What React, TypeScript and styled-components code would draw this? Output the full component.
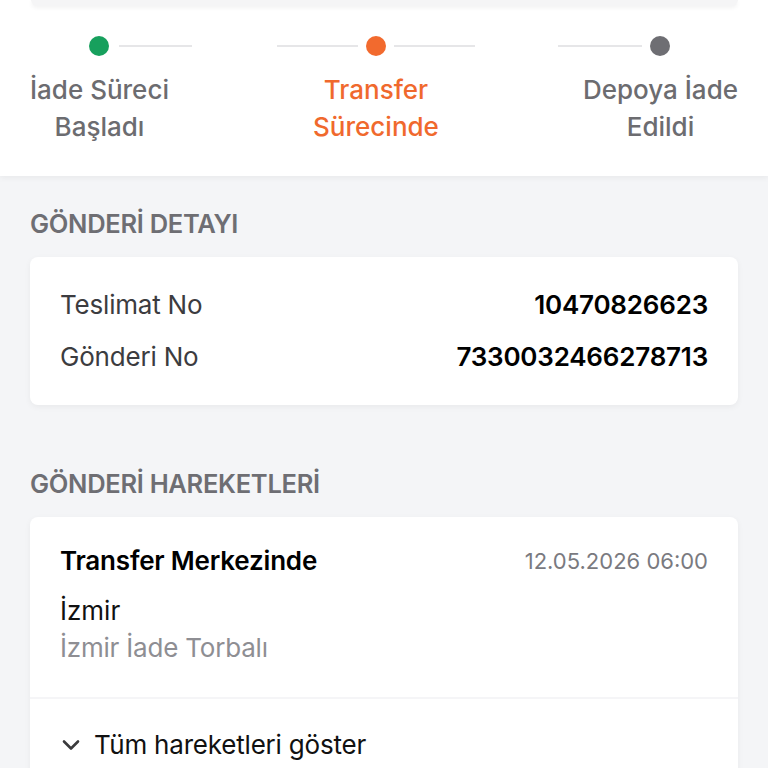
import React from "react";
import styled, { createGlobalStyle } from "styled-components";

const Global = createGlobalStyle`
  html, body { margin: 0; padding: 0; background: #f4f5f7; }
  body { font-family: Inter, "Noto Sans", "Liberation Sans", sans-serif; -webkit-font-smoothing: antialiased; }
  * { box-sizing: border-box; }
`;

const Page = styled.div`
  width: 768px;
  min-height: 768px;
  background: #f4f5f7;
  overflow: hidden;
`;

const Header = styled.div`
  background: #ffffff;
  padding: 0 30px 0;
  height: 176px;
  box-shadow: 0 2px 6px rgba(0, 0, 0, 0.05);
  position: relative;
  z-index: 1;
`;

const TopCard = styled.div`
  height: 6px;
  background: #f5f5f6;
  border-radius: 0 0 8px 8px;
  box-shadow: 0 2px 4px rgba(0, 0, 0, 0.05);
  margin: 0 0 0 1px;
`;

const Stepper = styled.div`
  display: flex;
  justify-content: space-between;
  padding-top: 30px;
`;

const Step = styled.div`
  display: flex;
  flex-direction: column;
  align-items: center;
`;

const Dot = styled.div<{ $color: string; $lw: number; $rw: number; $rg: number }>`
  width: 20px;
  height: 20px;
  border-radius: 50%;
  background: ${(p) => p.$color};
  position: relative;
  &::before,
  &::after {
    content: "";
    position: absolute;
    top: 9px;
    height: 2px;
    background: #e6e6e8;
  }
  &::before {
    display: ${(p) => (p.$lw > 0 ? "block" : "none")};
    right: 28px;
    width: ${(p) => p.$lw}px;
  }
  &::after {
    display: ${(p) => (p.$rw > 0 ? "block" : "none")};
    left: ${(p) => 20 + p.$rg}px;
    width: ${(p) => p.$rw}px;
  }
`;

const StepLabel = styled.div<{ $active: boolean }>`
  margin-top: 15px;
  font-size: 26px;
  line-height: 37px;
  font-weight: 500;
  text-align: center;
  color: ${(p) => (p.$active ? "#f0692d" : "#6c6c70")};
`;

const Content = styled.div`
  padding: 30px 30px 0;
`;

const SectionTitle = styled.div<{ $top?: number }>`
  font-size: 25.5px;
  font-weight: 600;
  color: #6e6e73;
  text-transform: uppercase;
  line-height: 34px;
  margin-top: ${(p) => p.$top ?? 0}px;
  margin-bottom: 16px;
  letter-spacing: -0.3px;
`;

const Card = styled.div`
  background: #ffffff;
  border-radius: 8px;
  box-shadow: 0 2px 6px rgba(0, 0, 0, 0.05);
`;

const DetailBody = styled.div`
  padding: 30px 30px 30px;
  display: flex;
  flex-direction: column;
  gap: 16px;
`;

const Row = styled.div`
  display: flex;
  justify-content: space-between;
  align-items: center;
  line-height: 36px;
  font-size: 26px;
  letter-spacing: -0.2px;
`;

const Label = styled.span`
  color: #3c3c40;
  font-weight: 400;
`;

const Value = styled.span`
  color: #000000;
  font-weight: 600;
`;

const MoveBody = styled.div`
  padding: 26px 30px 30px;
  border-bottom: 2px solid #f5f5f7;
`;

const MoveHead = styled.div`
  display: flex;
  justify-content: space-between;
  align-items: center;
  line-height: 36px;
`;

const MoveTitle = styled.span`
  font-size: 26px;
  font-weight: 600;
  color: #000000;
  letter-spacing: -0.2px;
`;

const MoveDate = styled.span`
  font-size: 22px;
  color: #7a7a7f;
`;

const City = styled.div`
  margin-top: 14px;
  font-size: 26px;
  line-height: 36px;
  color: #111111;
`;

const Place = styled.div`
  font-size: 26px;
  line-height: 38px;
  color: #8e8e93;
  letter-spacing: -0.2px;
`;

const ShowAll = styled.div`
  display: flex;
  align-items: center;
  gap: 14px;
  padding: 28px 30px 30px 32px;
  font-size: 26px;
  line-height: 36px;
  color: #111111;
  letter-spacing: -0.2px;
`;

const steps = [
  { label: ["İade Süreci", "Başladı"], color: "#17a05d", active: false, lw: 0, rw: 73, rg: 10 },
  { label: ["Transfer", "Sürecinde"], color: "#f26a2e", active: true, lw: 81, rw: 81, rg: 8 },
  { label: ["Depoya İade", "Edildi"], color: "#6e6e73", active: false, lw: 84, rw: 0, rg: 8 },
];

export default function App() {
  return (
    <Page>
      <Global />
      <Header>
        <TopCard />
        <Stepper>
          {steps.map((s, i) => (
            <Step key={i}>
              <Dot $color={s.color} $lw={s.lw} $rw={s.rw} $rg={s.rg} />
              <StepLabel $active={s.active}>
                {s.label[0]}
                <br />
                {s.label[1]}
              </StepLabel>
            </Step>
          ))}
        </Stepper>
      </Header>
      <Content>
        <SectionTitle $top={1}>Gönderİ Detayı</SectionTitle>
        <Card>
          <DetailBody>
            <Row>
              <Label>Teslimat No</Label>
              <Value>10470826623</Value>
            </Row>
            <Row>
              <Label>Gönderi No</Label>
              <Value>7330032466278713</Value>
            </Row>
          </DetailBody>
        </Card>
        <SectionTitle $top={62}>Gönderİ Hareketlerİ</SectionTitle>
        <Card>
          <MoveBody>
            <MoveHead>
              <MoveTitle>Transfer Merkezinde</MoveTitle>
              <MoveDate>12.05.2026 06:00</MoveDate>
            </MoveHead>
            <City>İzmir</City>
            <Place>İzmir İade Torbalı</Place>
          </MoveBody>
          <ShowAll>
            <svg width="18" height="12" viewBox="0 0 18 12" fill="none">
              <path d="M2 2.5 L9 9.5 L16 2.5" stroke="#3a3a3c" strokeWidth="2.6" strokeLinecap="round" strokeLinejoin="round" />
            </svg>
            Tüm hareketleri göster
          </ShowAll>
        </Card>
      </Content>
    </Page>
  );
}
